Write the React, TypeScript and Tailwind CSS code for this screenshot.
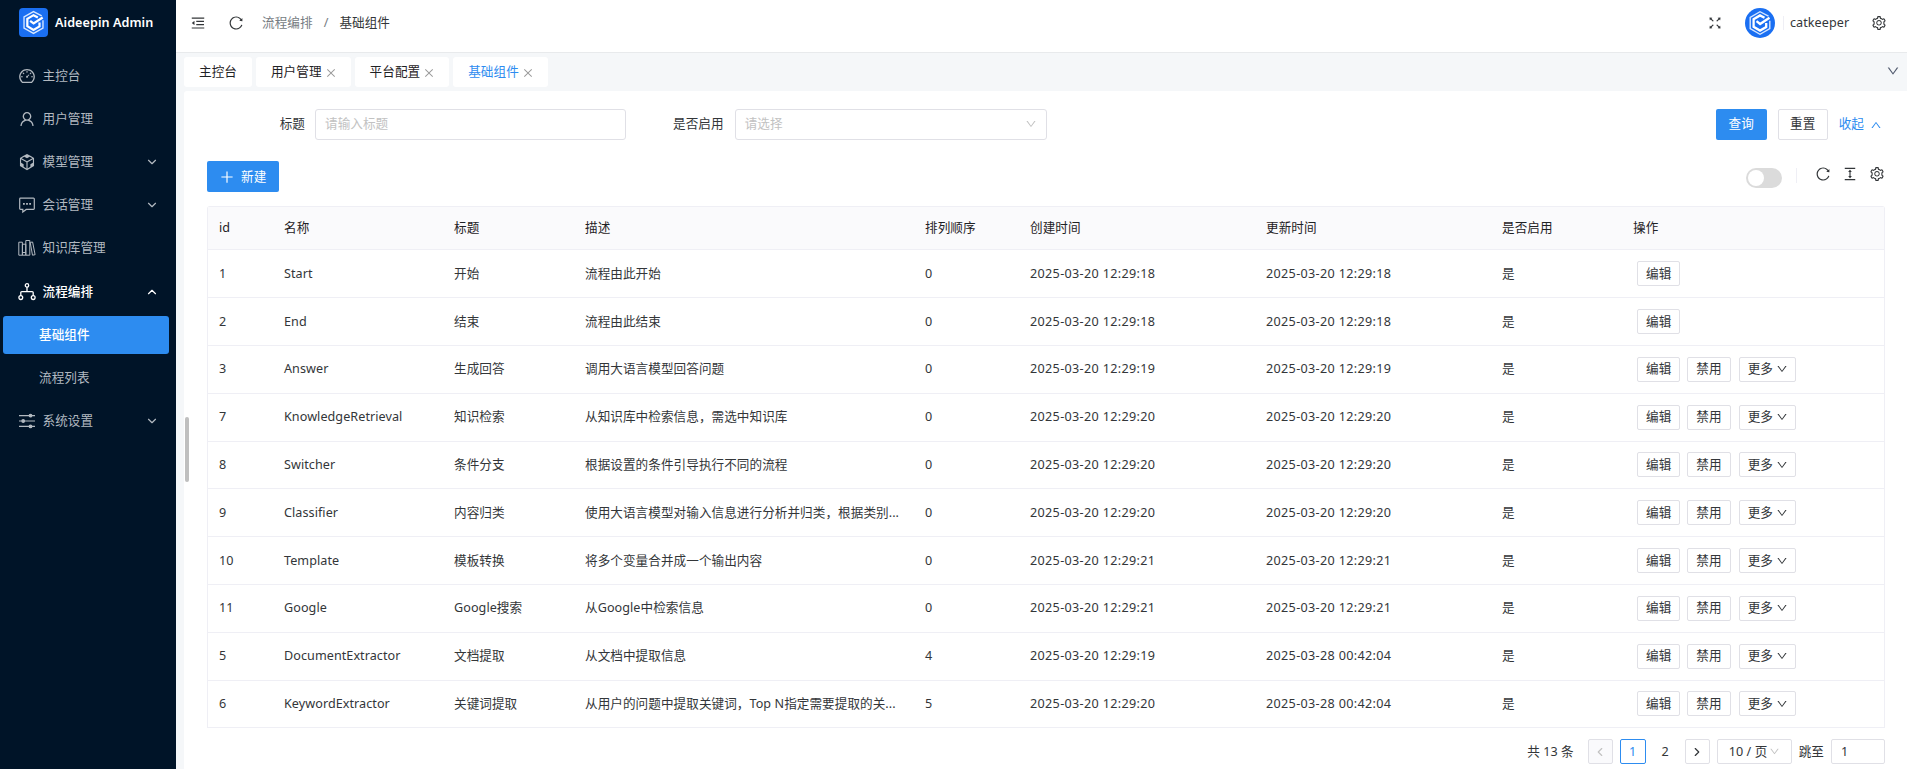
import React from "react";
import {
  AiOutlineDashboard,
  AiOutlineUser,
  AiOutlineCodeSandbox,
  AiOutlineMenuFold,
  AiOutlineReload,
  AiOutlineFullscreen,
  AiOutlineSetting,
  AiOutlineColumnHeight,
  AiOutlinePlus,
  AiOutlineDown,
  AiOutlineUp,
  AiOutlineClose,
} from "react-icons/ai";
import { FiChevronDown, FiChevronUp, FiChevronLeft, FiChevronRight } from "react-icons/fi";

interface Component {
  id: number;
  name: string;
  title: string;
  remark: string;
  order: number;
  createTime: string;
  updateTime: string;
}

interface MenuItemProps {
  icon: React.ReactNode;
  label: string;
  arrow?: "up" | "down";
  active?: boolean;
}

const rows: Component[] = [
  { id: 1, name: "Start", title: "开始", remark: "流程由此开始", order: 0, createTime: "2025-03-20 12:29:18", updateTime: "2025-03-20 12:29:18" },
  { id: 2, name: "End", title: "结束", remark: "流程由此结束", order: 0, createTime: "2025-03-20 12:29:18", updateTime: "2025-03-20 12:29:18" },
  { id: 3, name: "Answer", title: "生成回答", remark: "调用大语言模型回答问题", order: 0, createTime: "2025-03-20 12:29:19", updateTime: "2025-03-20 12:29:19" },
  { id: 7, name: "KnowledgeRetrieval", title: "知识检索", remark: "从知识库中检索信息，需选中知识库", order: 0, createTime: "2025-03-20 12:29:20", updateTime: "2025-03-20 12:29:20" },
  { id: 8, name: "Switcher", title: "条件分支", remark: "根据设置的条件引导执行不同的流程", order: 0, createTime: "2025-03-20 12:29:20", updateTime: "2025-03-20 12:29:20" },
  { id: 9, name: "Classifier", title: "内容归类", remark: "使用大语言模型对输入信息进行分析并归类，根据类别...", order: 0, createTime: "2025-03-20 12:29:20", updateTime: "2025-03-20 12:29:20" },
  { id: 10, name: "Template", title: "模板转换", remark: "将多个变量合并成一个输出内容", order: 0, createTime: "2025-03-20 12:29:21", updateTime: "2025-03-20 12:29:21" },
  { id: 11, name: "Google", title: "Google搜索", remark: "从Google中检索信息", order: 0, createTime: "2025-03-20 12:29:21", updateTime: "2025-03-20 12:29:21" },
  { id: 5, name: "DocumentExtractor", title: "文档提取", remark: "从文档中提取信息", order: 4, createTime: "2025-03-20 12:29:19", updateTime: "2025-03-28 00:42:04" },
  { id: 6, name: "KeywordExtractor", title: "关键词提取", remark: "从用户的问题中提取关键词，Top N指定需要提取的关...", order: 5, createTime: "2025-03-20 12:29:20", updateTime: "2025-03-28 00:42:04" },
];

const tabs = ["主控台", "用户管理", "平台配置", "基础组件"];

const headers = ["id", "名称", "标题", "描述", "排列顺序", "创建时间", "更新时间", "是否启用", "操作"];

const gridCols = "grid grid-cols-[65px_170px_131px_340px_105px_236px_236px_131px_1fr] items-center";

const Logo: React.FC<{ className: string }> = ({ className }) => (
  <svg viewBox="0 0 30 30" className={className}>
    <rect width="30" height="30" fill="#1a6ff2" />
    <path d="M23.5 8.2 15 3.7 5.2 9.3v11.4l9.8 5.6 9.8-5.6v-8" fill="none" stroke="#d5e6ff" strokeWidth="1.4" />
    <path d="M19.5 9.8 15 7.4l-6.4 3.8v7.6l6.4 3.8 6.2-3.6v-4" fill="none" stroke="#fff" strokeWidth="2.3" />
    <path d="m11.5 13.2 3.6 2.8 9.4-6.2" fill="none" stroke="#fff" strokeWidth="2.3" />
  </svg>
);

const MessageIcon: React.FC = () => (
  <svg viewBox="0 0 18 18" className="size-[18px]" fill="none" stroke="currentColor" strokeWidth="1.2">
    <path d="M2.5 2.2h13a.8.8 0 0 1 .8.8v9.6a.8.8 0 0 1-.8.8H8.2L4.8 16v-2.6H2.5a.8.8 0 0 1-.8-.8V3a.8.8 0 0 1 .8-.8Z" />
    <path d="M5 7.8h1.8M8.1 7.8h1.8M11.2 7.8H13" strokeWidth="1.7" />
  </svg>
);

const LibraryIcon: React.FC = () => (
  <svg viewBox="0 0 18 18" className="size-[18px]" fill="none" stroke="currentColor" strokeWidth="1">
    <path d="M.8 3.2h3.6v13H.8zM4.4 5.2h3.4v11H4.4zM7.8 1.5h4v14.7h-4z" />
    <path d="m12.2 3.4 2.4-.4 2.5 12.7-2.6.5zM4.4 13.5h3.4" />
  </svg>
);

const FlowIcon: React.FC = () => (
  <svg viewBox="0 0 18 18" className="size-[18px]" fill="none" stroke="currentColor" strokeWidth="1.3">
    <circle cx="9" cy="2.4" r="1.7" />
    <circle cx="2.8" cy="14.6" r="1.9" />
    <circle cx="15.2" cy="14.6" r="1.9" />
    <path d="M9 4.1v4.4M2.8 12.7V9.6a1 1 0 0 1 1-1h10.4a1 1 0 0 1 1 1v3.1" />
  </svg>
);

const OptionsIcon: React.FC = () => (
  <svg viewBox="0 0 18 18" className="size-[18px]" fill="currentColor" stroke="currentColor" strokeWidth="1.2">
    <path d="M1 3.6h16M1 9h16M1 14.4h16" />
    <circle cx="12.5" cy="3.6" r="1.3" />
    <circle cx="5.2" cy="9" r="1.3" />
    <circle cx="12.5" cy="14.4" r="1.3" />
  </svg>
);

const MenuItem: React.FC<MenuItemProps> = ({ icon, label, arrow, active }) => (
  <div className={`flex h-[43.2px] items-center pl-[18px] pr-[17px] ${active ? "font-medium text-white" : "text-[#b2b9c0]"}`}>
    <span className="w-[24.5px] text-[18px]">{icon}</span>
    <span className="flex-1">{label}</span>
    {arrow === "down" && <FiChevronDown className="size-[14px]" />}
    {arrow === "up" && <FiChevronUp className="size-[14px]" />}
  </div>
);

const SmallButton: React.FC<{ children: React.ReactNode }> = ({ children }) => (
  <button className="flex h-[25px] items-center rounded-[2px] border border-[#e0e0e6] px-[8px]">{children}</button>
);

const Sidebar: React.FC = () => (
  <aside className="flex w-[176px] shrink-0 flex-col bg-[#001428]">
    <div className="flex h-[54px] items-start pl-[19px] pt-[8px]">
      <Logo className="size-[29px] rounded-[4px]" />
      <h2 className="ml-[7px] mt-[5px] text-[12.6px] leading-[19px] font-semibold text-white">Aideepin Admin</h2>
    </div>
    <MenuItem icon={<AiOutlineDashboard />} label="主控台" />
    <MenuItem icon={<AiOutlineUser />} label="用户管理" />
    <MenuItem icon={<AiOutlineCodeSandbox className="-ml-px size-[20px]" />} label="模型管理" arrow="down" />
    <MenuItem icon={<MessageIcon />} label="会话管理" arrow="down" />
    <MenuItem icon={<LibraryIcon />} label="知识库管理" />
    <MenuItem icon={<FlowIcon />} label="流程编排" arrow="up" active />
    <div className="ml-[3px] mr-[7px] mt-[3px] mb-[2.4px] flex h-[37.8px] items-center rounded-[3px] bg-[#2d8cf0] pl-[36px] font-medium text-white">
      基础组件
    </div>
    <div className="flex h-[43.2px] items-center pl-[39px] text-[#b2b9c0]">流程列表</div>
    <MenuItem icon={<OptionsIcon />} label="系统设置" arrow="down" />
  </aside>
);

const Header: React.FC = () => (
  <header className="flex h-[53px] shrink-0 items-start border-b border-[#e8eaec] bg-white pt-[8px]">
    <div className="flex h-[29px] flex-1 items-center">
      <AiOutlineMenuFold className="ml-[14px] size-[16px]" />
      <AiOutlineReload className="ml-[22px] size-[16px]" />
      <span className="ml-[18px] text-[#767c82]">流程编排</span>
      <span className="mx-[11px] text-[#767c82]">/</span>
      <span>基础组件</span>
    </div>
    <div className="flex h-[30px] items-center">
      <AiOutlineFullscreen className="size-[16px]" />
      <Logo className="ml-[22px] size-[30px] rounded-full" />
      <span className="ml-[8px] h-[14px] w-px bg-[#efeff5]" />
      <span className="ml-[6px] w-[60px]">catkeeper</span>
      <AiOutlineSetting className="ml-[21px] mr-[20px] size-[16px]" />
    </div>
  </header>
);

const TabsBar: React.FC = () => (
  <div className="flex h-[38px] shrink-0 items-center pl-[8px]">
    {tabs.map((tab, index) => (
      <div
        key={tab}
        className={`mr-[4px] flex h-[30px] items-center rounded-[3px] bg-white pl-[15px] pb-px ${index === 0 ? "pr-[15px]" : "pr-[14px]"} ${index === 3 ? "text-[#2d8cf0]" : "text-[#1f2225]"}`}
      >
        {tab}
        {index > 0 && <AiOutlineClose className="ml-[3px] mt-[3px] size-[12px] text-[#9a9a9a]" />}
      </div>
    ))}
    <AiOutlineDown className="ml-auto mr-[7px] mb-[2px] size-[14px] text-[#515a6e]" />
  </div>
);

const SearchForm: React.FC = () => (
  <div className="flex h-[31px] items-center">
    <span className="w-[98px] pb-px text-right">标题</span>
    <div className="ml-[10px] flex h-[31px] w-[311px] items-center rounded-[3px] border border-[#e0e0e6] px-[9px] pb-px text-[#c2c2c2]">
      请输入标题
    </div>
    <span className="ml-[47px] pb-px">是否启用</span>
    <div className="ml-[11px] flex h-[31px] w-[312px] items-center justify-between rounded-[3px] border border-[#e0e0e6] px-[9px] pb-px text-[#c2c2c2]">
      请选择
      <AiOutlineDown className="size-[12px]" />
    </div>
    <div className="ml-auto flex items-center">
      <button className="h-[31px] w-[51px] rounded-[2px] bg-[#2d8cf0] pb-px text-white">查询</button>
      <button className="ml-[11px] h-[31px] w-[50px] rounded-[2px] border border-[#e0e0e6] pb-px">重置</button>
      <span className="ml-[11px] pb-px text-[#2d8cf0]">收起</span>
      <AiOutlineUp className="ml-[6px] mr-[3px] size-[12px] text-[#2d8cf0]" />
    </div>
  </div>
);

const Toolbar: React.FC = () => (
  <div className="mt-[21px] flex h-[31px] items-start">
    <button className="flex h-[31px] w-[72px] items-center rounded-[2px] bg-[#2d8cf0] pl-[12px] text-white">
      <AiOutlinePlus className="mr-[6px] size-[16px]" />
      新建
    </button>
    <div className="ml-auto mt-[7px] flex h-[20px] w-[36px] items-center rounded-full bg-[#dbdbdb] p-[2px]">
      <div className="size-[16px] rounded-full bg-white" />
    </div>
    <div className="ml-[14px] mt-[7px] h-[15px] w-px bg-[#efeff5]" />
    <AiOutlineReload className="ml-[18px] mt-[5px] size-[16px]" />
    <AiOutlineColumnHeight className="ml-[11px] mt-[5px] size-[16px]" />
    <AiOutlineSetting className="ml-[11px] mt-[5px] size-[16px]" />
  </div>
);

const DataTable: React.FC = () => (
  <div className="mt-[14px] rounded-t-[3px] border-x border-t border-[#efeff5]">
    <div className={`${gridCols} h-[43.4px] border-b border-[#efeff5] bg-[#fafafc] pl-[11px] text-[#1f2225]`}>
      {headers.map((header) => (
        <span key={header}>{header}</span>
      ))}
    </div>
    {rows.map((row) => (
      <div key={row.id} className={`${gridCols} h-[47.8px] border-b border-[#efeff5] pl-[11px]`}>
        <span>{row.id}</span>
        <span>{row.name}</span>
        <span>{row.title}</span>
        <span className="whitespace-nowrap">{row.remark}</span>
        <span>{row.order}</span>
        <span className="tracking-[0.33px]">{row.createTime}</span>
        <span className="tracking-[0.33px]">{row.updateTime}</span>
        <span>是</span>
        <div className="flex pl-[4px]">
          <SmallButton>编辑</SmallButton>
          {row.id > 2 && (
            <div className="ml-[7px] flex gap-[8px]">
              <SmallButton>禁用</SmallButton>
              <SmallButton>
                更多
                <AiOutlineDown className="-mr-px ml-[3px] size-[12px]" />
              </SmallButton>
            </div>
          )}
        </div>
      </div>
    ))}
  </div>
);

const Pagination: React.FC = () => (
  <div className="mt-[11px] flex h-[25px] items-center justify-end">
    <span className="mr-[14px]">共 13 条</span>
    <span className="flex size-[25px] items-center justify-center rounded-[2px] border border-[#e0e0e6] bg-[#fafafc] text-[#c2c2c2]">
      <FiChevronLeft className="size-[14px]" />
    </span>
    <span className="ml-[7px] flex h-[25px] w-[26px] items-center justify-center rounded-[2px] border border-[#2d8cf0] text-[#2d8cf0]">1</span>
    <span className="ml-[7px] flex size-[25px] items-center justify-center">2</span>
    <span className="ml-[7px] flex size-[25px] items-center justify-center rounded-[2px] border border-[#e0e0e6]">
      <FiChevronRight className="size-[14px]" />
    </span>
    <span className="ml-[7px] flex h-[25px] w-[75px] items-center rounded-[2px] border border-[#e0e0e6] pl-[11px] whitespace-nowrap">
      10 / 页
      <AiOutlineDown className="ml-[2px] size-[11px] shrink-0 text-[#c2c2c2]" />
    </span>
    <span className="ml-[7px]">跳至</span>
    <span className="ml-[7px] flex h-[25px] w-[54px] items-center rounded-[2px] border border-[#e0e0e6] pl-[9px]">1</span>
  </div>
);

const App: React.FC = () => {
  return (
    <div className="flex h-[769px] w-[1907px] overflow-hidden bg-[#f5f7f9] font-['Noto_Sans','Noto_Sans_CJK_SC',sans-serif] text-[12.6px] leading-[20px] tracking-[0.06px] text-[#333639]">
      <Sidebar />
      <div className="flex min-w-0 flex-1 flex-col">
        <Header />
        <TabsBar />
        <main className="relative ml-[8px] flex-1 rounded-tl-[3px] bg-white pl-[23px] pr-[22px] pt-[18px]">
          {/* Scrollbar thumb */}
          <div className="absolute left-[1px] top-[326px] h-[65px] w-[4px] rounded-full bg-[#bfbfbf]" />
          <SearchForm />
          <Toolbar />
          <DataTable />
          <Pagination />
        </main>
      </div>
    </div>
  );
};

export default App;
